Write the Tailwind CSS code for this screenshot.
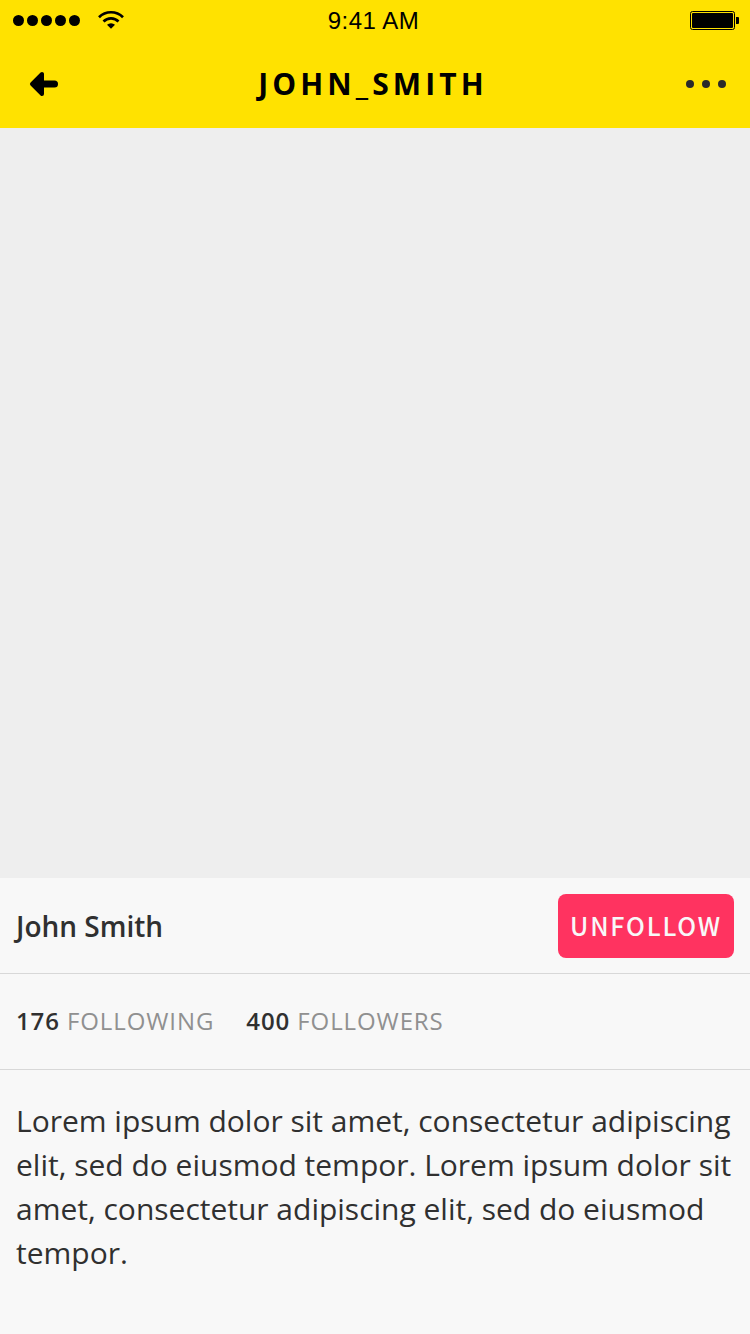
<!DOCTYPE html>
<html lang="en"><head><meta charset="utf-8"><title>John Smith</title>
<script src="https://cdn.jsdelivr.net/npm/@tailwindcss/browser@4"></script></head>
<body class="w-[750px] h-[1334px] overflow-hidden flex flex-col bg-[#f8f8f8] font-['Open_Sans',sans-serif] text-[#303030]">
<header class="h-32 bg-[#ffe200] text-black shrink-0">
<div class="h-10 grid grid-cols-3 items-center">
<svg width="140" height="40" viewBox="0 0 140 40"><circle cx="18.5" cy="20.5" r="5.5"/><circle cx="32.5" cy="20.5" r="5.5"/><circle cx="46.5" cy="20.5" r="5.5"/><circle cx="60.5" cy="20.5" r="5.5"/><circle cx="74.5" cy="20.5" r="5.5"/><g fill="none" stroke="#000" stroke-width="2.7"><path d="M99 17.200a17 17 0 0 1 24 0"/><path d="M103.500 21.500a10.600 10.600 0 0 1 15 0"/></g><path d="M107 24.800a6 6 0 0 1 8 0L111 28.800z"/></svg>
<span class="justify-self-center pr-[3px] pt-0.5 tracking-[0.5px] font-['Liberation_Sans',sans-serif] text-2xl">9:41 AM</span>
<svg class="justify-self-end" width="80" height="40" viewBox="670 0 80 40"><rect x="690.5" y="11.500" width="44" height="18" rx="2" fill="none" stroke="#000"/><rect x="692" y="13" width="41" height="15" rx="1"/><path d="M736 17h2q1 0 1 1v5q0 1-1 1h-2z"/></svg>
</div>
<div class="h-22 grid grid-cols-[140px_1fr_140px] items-center">
<svg width="140" height="88" viewBox="0 40 140 88"><path d="M42 84H54.500" stroke="#000" stroke-width="7" stroke-linecap="round"/><path d="M32 84L42 74V94Z" stroke="#000" stroke-width="4" stroke-linejoin="round"/></svg>
<h1 class="justify-self-center pr-1 pb-[2px] text-[30px] font-bold tracking-[4.1px]">JOHN_SMITH</h1>
<svg class="justify-self-end" width="80" height="88" viewBox="670 40 80 88" fill="#2a2a2a"><circle cx="690" cy="84" r="4"/><circle cx="706" cy="84" r="4"/><circle cx="722" cy="84" r="4"/></svg>
</div></header>
<div class="h-[750px] bg-[#eee] shrink-0"></div>
<section class="h-24 px-4 flex items-center justify-between border-b border-[#d8d8d8] shrink-0">
<h2 class="text-[28px] font-semibold">John Smith</h2>
<button class="w-44 h-16 rounded-lg bg-[#ff3360] text-[#f8f8f8] text-[25px] font-medium font-['Noto_Sans_CJK_SC',sans-serif] tracking-[1.8px]">UNFOLLOW</button>
</section>
<section class="h-24 px-4 pb-0.5 flex items-center gap-8 text-2xl tracking-[0.9px] text-[#909090] border-b border-[#d8d8d8] shrink-0">
<div><b class="font-semibold text-[#303030]">176</b> FOLLOWING</div><div><b class="font-semibold text-[#303030]">400</b> FOLLOWERS</div>
</section>
<p class="px-4 pt-[29px] text-[30px] leading-[44px] tracking-[-0.01px]"><span class="block whitespace-nowrap">Lorem ipsum dolor sit amet, consectetur adipiscing</span><span class="block whitespace-nowrap">elit, sed do eiusmod tempor. Lorem ipsum dolor sit</span><span class="block whitespace-nowrap">amet, consectetur adipiscing elit, sed do eiusmod</span><span class="block">tempor.</span></p>
</body></html>
